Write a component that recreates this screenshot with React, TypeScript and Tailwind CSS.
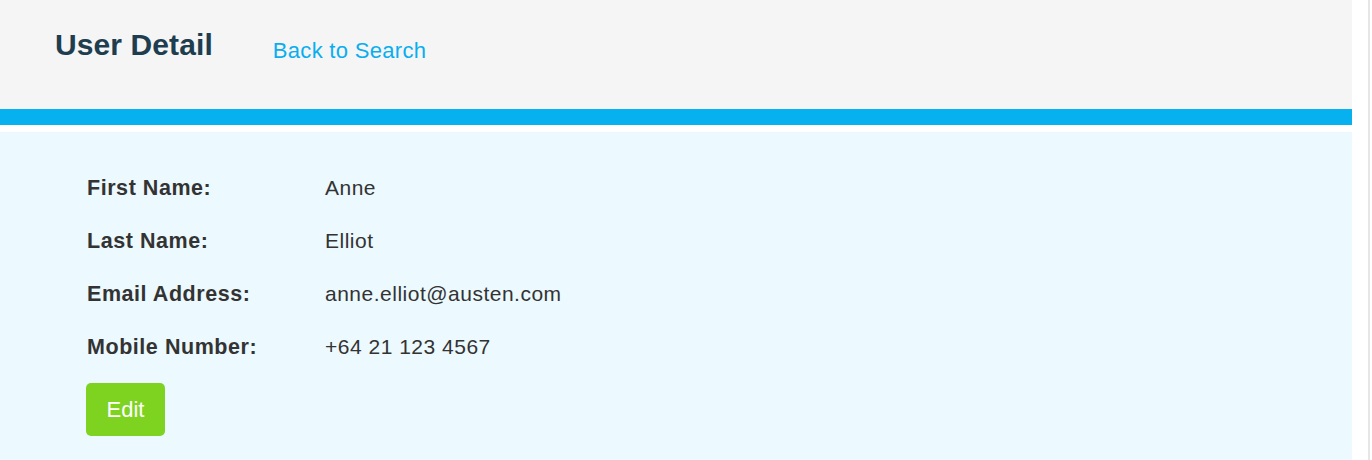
const user = [
  ['First Name:', 'Anne'],
  ['Last Name:', 'Elliot'],
  ['Email Address:', 'anne.elliot@austen.com'],
  ['Mobile Number:', '+64 21 123 4567'],
];

export default function App() {
  return (
    <div className="flex h-[460px] w-full bg-white font-['Liberation_Sans',Arial,sans-serif]">
      <div className="flex w-[1352px] flex-col">
        <header className="flex h-[109px] items-start gap-[60px] bg-[#f5f5f5] pl-[55px] pt-[27px]">
          <h1 className="text-[30px] font-bold leading-[36px] tracking-[0.1px] text-[#1e3d4f]">User Detail</h1>
          <a href="#" className="mt-[9px] text-[22px] leading-[30px] tracking-[0.3px] text-[#0aaeef]">
            Back to Search
          </a>
        </header>
        <div className="h-[16px] bg-[#07b0ef]" />
        <div className="mt-[7px] flex-1 bg-[#ecf9fe] pl-[87px] pt-[29px] text-[21px] text-[#333]">
          {user.map(([label, value]) => (
            <div key={label} className="flex h-[53px] items-baseline pt-[14px] leading-[26px]">
              <div className="w-[238px] text-[21.5px] font-bold tracking-[0.55px]">{label}</div>
              <div className="tracking-[0.5px]">{value}</div>
            </div>
          ))}
          <button className="-ml-px mt-[10px] h-[53px] w-[79px] rounded-[5px] bg-[#7ed321] text-[22px] text-white">
            Edit
          </button>
        </div>
      </div>
      <div className="ml-[16px] w-[2px] bg-[#e6e6e6]" />
    </div>
  );
}
